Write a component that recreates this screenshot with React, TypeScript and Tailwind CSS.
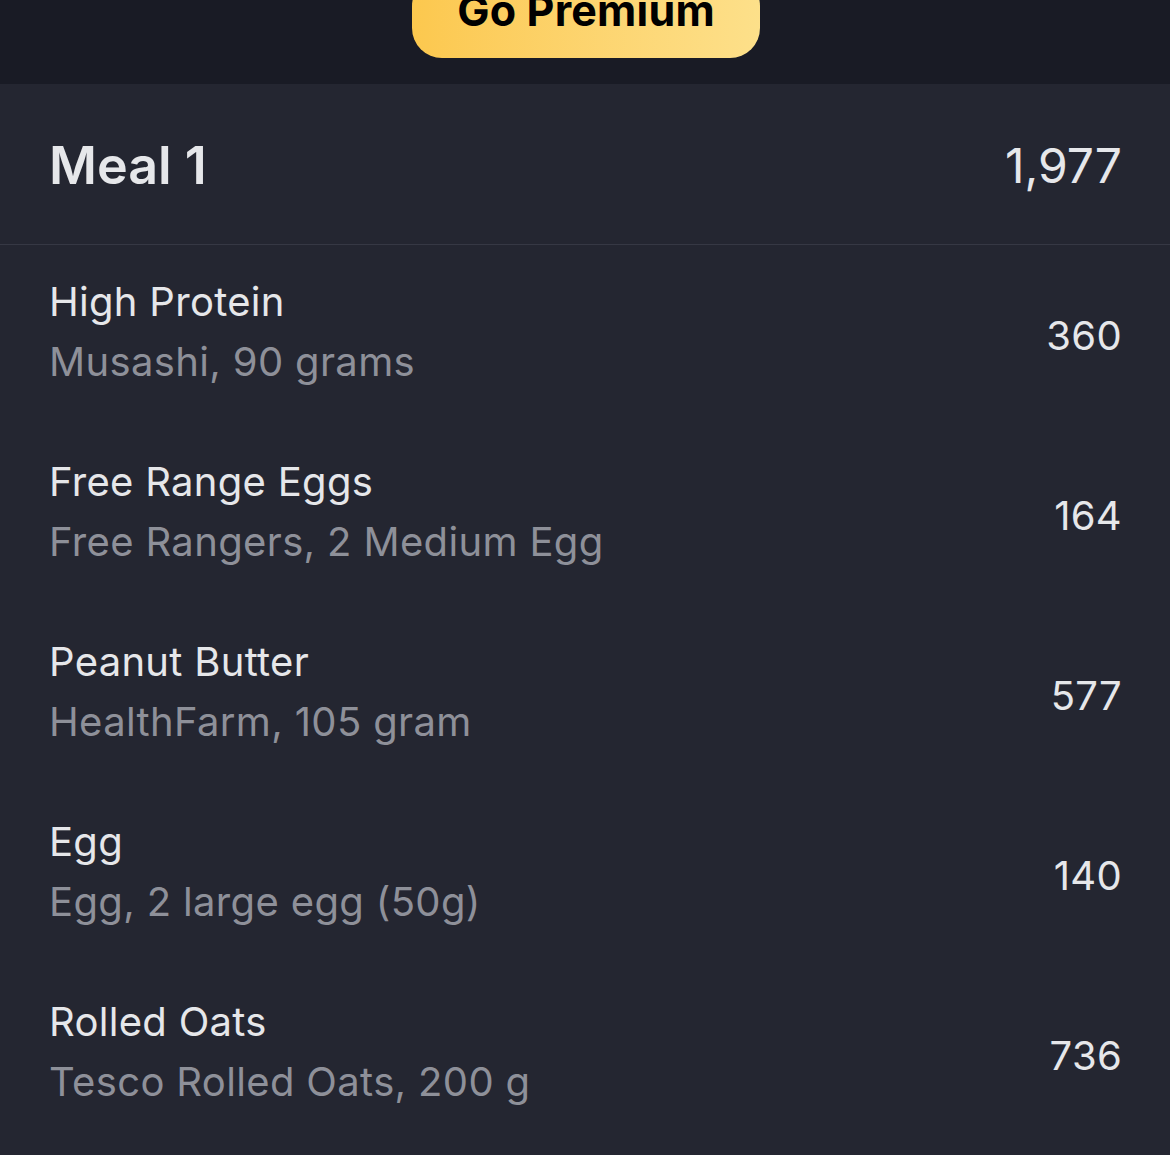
import React from "react";

const items = [
  { name: "High Protein", detail: "Musashi, 90 grams", kcal: "360" },
  { name: "Free Range Eggs", detail: "Free Rangers, 2 Medium Egg", kcal: "164" },
  { name: "Peanut Butter", detail: "HealthFarm, 105 gram", kcal: "577" },
  { name: "Egg", detail: "Egg, 2 large egg (50g)", kcal: "140" },
  { name: "Rolled Oats", detail: "Tesco Rolled Oats, 200 g", kcal: "736" },
];

export default function App() {
  return (
    <div
      className="w-[1170px] h-[1155px] overflow-hidden bg-[#242631] flex flex-col"
      style={{ fontFamily: "Inter, 'Noto Sans', sans-serif" }}
    >
      <div className="h-[84px] shrink-0 bg-[#191b25] flex justify-center items-start overflow-hidden">
        <div className="mt-[-24px] ml-[2px] w-[348px] h-[82px] rounded-[30px] bg-gradient-to-r from-[#fcc84e] to-[#fde08a] flex items-center justify-center">
          <span className="text-[43px] font-bold text-black leading-none tracking-[0.2px] mt-[-14px]">Go Premium</span>
        </div>
      </div>
      <div className="h-[161px] shrink-0 flex items-center justify-between pl-[49px] pr-[48px] border-b border-[#363844]">
        <span className="text-[52px] font-semibold text-[#e6e7ea] leading-none mt-[4px]">Meal 1</span>
        <span className="text-[48px] text-[#e6e7ea] leading-none mt-[4px]">1,977</span>
      </div>
      {items.map((it) => (
        <div key={it.name} className="h-[180px] shrink-0 flex items-center justify-between pl-[49px] pr-[48px]">
          <div className="flex flex-col mt-[-6px]">
            <span className="text-[40px] leading-[60px] tracking-[0.3px] text-[#e6e7ea]">{it.name}</span>
            <span className="text-[40px] leading-[60px] tracking-[0.35px] text-[#8e9099]">{it.detail}</span>
          </div>
          <span className="text-[40px] text-[#e6e7ea] leading-none tracking-[0.3px] mt-[2px]">{it.kcal}</span>
        </div>
      ))}
    </div>
  );
}
